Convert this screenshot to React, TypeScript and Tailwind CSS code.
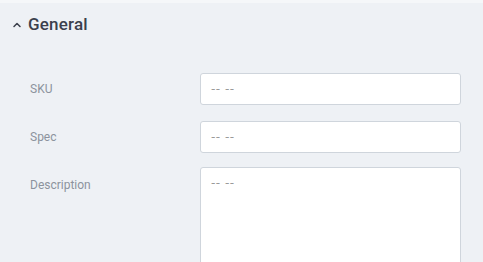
export default function App() {
  const ph = { fontFamily: "'DejaVu Sans', sans-serif" };
  return (
    <div className="w-[483px] h-[262px] overflow-hidden bg-[#eef1f5] border-t-[3px] border-[#f5f7f9]" style={{ fontFamily: "Roboto, 'Noto Sans', sans-serif" }}>
      <div className="flex items-center h-[42px] pl-[12px] pt-[1px]">
        <svg width="10" height="10" viewBox="0 0 10 10" className="mr-[6px] mt-[1px]">
          <path d="M2 6.5 L5 3.5 L8 6.5" stroke="#3b404c" strokeWidth="1.5" fill="none" strokeLinecap="round" strokeLinejoin="round" />
        </svg>
        <span className="text-[17px] font-medium text-[#3b404c] tracking-[0.2px]">General</span>
      </div>
      <div className="pt-[28px] flex flex-col">
        <div className="flex items-center h-[32px]">
          <div className="w-[200px] pl-[30px] text-[12px] text-[#8c939d]">SKU</div>
          <div className="w-[261px] h-[32px] bg-white border border-[#cfd5dc] rounded-[3px] flex items-center pl-[10px] text-[12px] text-[#9a9a9a] tracking-[0.5px]" style={ph}>-- --</div>
        </div>
        <div className="flex items-center h-[32px] mt-[16px]">
          <div className="w-[200px] pl-[30px] text-[12px] text-[#8c939d]">Spec</div>
          <div className="w-[261px] h-[32px] bg-white border border-[#cfd5dc] rounded-[3px] flex items-center pl-[10px] text-[12px] text-[#9a9a9a] tracking-[0.5px]" style={ph}>-- --</div>
        </div>
        <div className="flex items-start mt-[14px]">
          <div className="w-[200px] pl-[30px] pt-[9px] text-[12px] text-[#8c939d]">Description</div>
          <div className="w-[261px] h-[120px] bg-white border border-[#cfd5dc] rounded-[3px] pl-[10px] pt-[7px] text-[12px] text-[#9a9a9a] leading-[16px] tracking-[0.5px]" style={ph}>-- --</div>
        </div>
      </div>
    </div>
  );
}
